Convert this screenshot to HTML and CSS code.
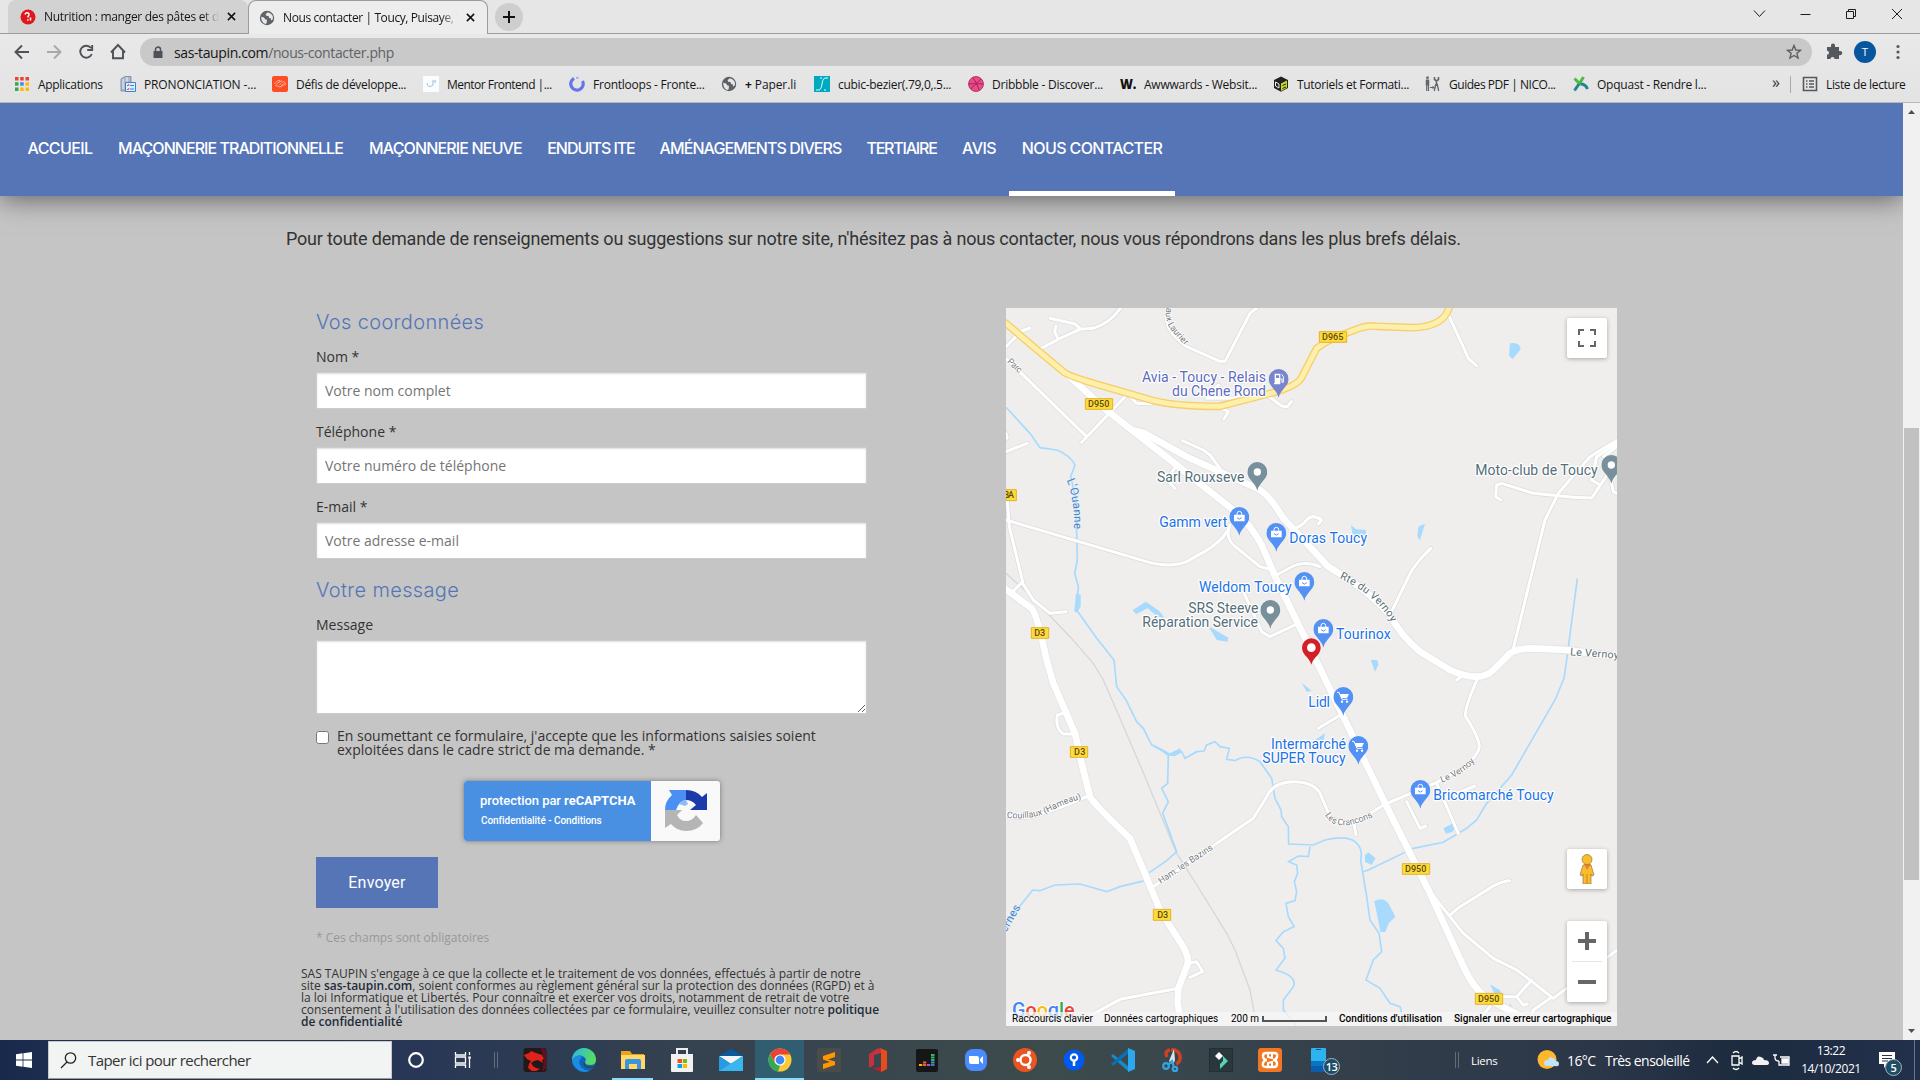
FILE: index.html
```html
<!DOCTYPE html>
<html lang="fr">
<head>
<meta charset="utf-8">
<title>Nous contacter | Toucy, Puisaye</title>
<link rel="stylesheet" href="styles.css">
</head>
<body>
<svg class="sprites" width="0" height="0" aria-hidden="true">
  <symbol id="globe" viewBox="0 0 16 16"><circle cx="8" cy="8" r="7.2" fill="#5f6368"/><path d="M2.2 6.8 5 7.4l1.4 2 1.6.4-.4 3.4-1.4.8C3.600 13 2 10.500 2.200 6.800ZM8.800 2.300l-2.200 1.900.6 1.600 2.300.3.600 1.900 1.600.2.500 2.200 1.700-1.200c.6-3.600-1.500-6-5.100-6.900Z" fill="#e8e8e8"/></symbol>
  <symbol id="bag" viewBox="-30 -30 60 88"><path d="M0 56C-5 32-30 22-30 0a30 30 0 0 1 60 0C30 22 5 32 0 56Z" fill="#5491f5"/><path d="M-16-7h32v20h-32Z" fill="#fff"/><path d="M-7-6v-4a7 7 0 0 1 14 0v4" fill="none" stroke="#fff" stroke-width="3"/><path d="M-7 2q7 9 14 0" fill="none" stroke="#5491f5" stroke-width="3"/></symbol>
  <symbol id="cart" viewBox="-30 -30 60 88"><path d="M0 56C-5 32-30 22-30 0a30 30 0 0 1 60 0C30 22 5 32 0 56Z" fill="#5491f5"/><path d="M-11-9h28l-6 12H-6Z" fill="#fff"/><path d="M-19-14h6l9 21H13" fill="none" stroke="#fff" stroke-width="3"/><circle cx="-4" cy="14" r="3.500" fill="#fff"/><circle cx="11" cy="14" r="3.500" fill="#fff"/></symbol>
  <symbol id="place" viewBox="-30 -30 60 88"><path d="M0 56C-5 32-30 22-30 0a30 30 0 0 1 60 0C30 22 5 32 0 56Z" fill="#78909c"/><circle r="11" fill="#fff"/></symbol>
  <symbol id="fuel" viewBox="-30 -30 60 88"><path d="M0 56C-5 32-30 22-30 0a30 30 0 0 1 60 0C30 22 5 32 0 56Z" fill="#7986cb"/><path d="M-12-16H5v32h-19v-4h2Z" fill="#fff"/><path d="M-8-11h9v8h-9Z" fill="#7986cb"/><path d="M5 0h5v10h4V-7L9-14" fill="none" stroke="#fff" stroke-width="3"/></symbol>
</svg>

<header class="browser">
  <div class="tabs">
    <div class="tab">
      <svg class="fav" viewBox="0 0 16 16"><circle cx="8" cy="8" r="7.500" fill="#e0171f"/><path d="M5 5.500Q6 3 8 4t0 3.500v1M7.800 10.200v1.500M10.500 8.500v3" stroke="#fff" stroke-width="1.500" fill="none"/></svg>
      <span class="tab-title">Nutrition : manger des pâtes et du</span>
      <svg class="close" viewBox="0 0 10 10"><path d="m1 1 8 8M9 1 1 9"/></svg>
    </div>
    <div class="tab active">
      <svg class="fav"><use href="#globe"/></svg>
      <span class="tab-title second">Nous contacter | Toucy, Puisaye, Y</span>
      <svg class="close" viewBox="0 0 10 10"><path d="m1 1 8 8M9 1 1 9"/></svg>
    </div>
    <div class="newtab"><svg viewBox="0 0 12 12"><path d="M6 0v12M0 6h12"/></svg></div>
    <svg class="winctl" viewBox="0 0 170 34"><path d="m6 10.500 5.500 6 5.500-6M52.500 14.500h10M98.500 11.500h7v7h-7ZM100.500 11.500v-2h7v7h-2M144 9l10 10M154 9l-10 10"/></svg>
  </div>
  <div class="toolbar">
    <svg class="navicons" viewBox="0 0 130 36"><g fill="none" stroke="#4e5257" stroke-width="1.900"><path d="M29 18H16M22 11.500 15.500 18l6.500 6.500"/><path d="M47 18h13M54 11.500l6.500 6.500-6.500 6.500" stroke="#a6a8aa"/><path d="M91 14a6 6 0 1 0 .8 6M92.200 11v5h-5"/><path d="M111 18.500 118 11l7 7.500M113 17v7.200h10V17"/></g></svg>
    <div class="omnibox">
      <svg class="lock" viewBox="0 0 10 13"><path d="M.5 5h9v7h-9Z" fill="#4e5257"/><path d="M2.500 5V3.500a2.500 2.500 0 0 1 5 0V5" fill="none" stroke="#4e5257" stroke-width="1.500"/></svg>
      <span class="url">sas-taupin.com<i>/nous-contacter.php</i></span>
      <svg class="star" viewBox="0 0 16 16"><path d="m8 1.500 1.800 4.500 4.700.3-3.600 3 1.200 4.700L8 11.500 3.900 14l1.200-4.700-3.600-3L6.200 6Z"/></svg>
    </div>
    <svg class="toolend" viewBox="0 0 100 36"><path d="M8 13h4v-1.500a2 2 0 0 1 4 0V13h4v4h1.200a2 2 0 0 1 0 4.200H20V25h-4.500a2 2 0 0 0-4 0H8v-4.200a2 2 0 0 0 0-4Z" fill="#55595e"/><circle cx="46" cy="18" r="11" fill="#07579f"/><text x="46" y="22" text-anchor="middle" fill="#fff" font-size="11.500">T</text><g fill="#55595e"><circle cx="79" cy="12.500" r="1.600"/><circle cx="79" cy="18" r="1.600"/><circle cx="79" cy="23.500" r="1.600"/></g></svg>
  </div>
  <div class="bookmarks">
    <div class="bm"><svg viewBox="0 0 16 16"><path d="M1 1h3.500v3.500H1ZM6.200 1h3.500v3.500H6.200ZM11.500 1H15v3.500h-3.500Z" fill="#ea4335"/><path d="M1 6.200h3.500v3.500H1Z" fill="#34a853"/><path d="M6.200 6.200h3.500v3.500H6.200Z" fill="#4285f4"/><path d="M11.500 6.200H15v3.500h-3.500ZM11.500 11.500H15V15h-3.500ZM6.200 11.500h3.500V15H6.200Z" fill="#fbbc04"/><path d="M1 11.500h3.500V15H1Z" fill="#34a853"/></svg><span class="b0">Applications</span></div>
    <div class="bm"><svg viewBox="0 0 16 16"><path d="M1 3 5 .5h6V15H1Z" fill="#aebaca" stroke="#66758a" stroke-width=".7"/><path d="M3 3v10M7 1v5" stroke="#e9f1fa"/><path d="M5.500 6.500h10v9h-10Z" fill="#dceeff" stroke="#3d82cb"/><path d="m7 9 1 1 1-2M7 13l1 1 1-2" stroke="#e44" fill="none"/><path d="M10 9.500h4M10 13h4" stroke="#3d82cb"/></svg><span class="b1">PRONONCIATION -...</span></div>
    <div class="bm"><svg viewBox="0 0 16 16"><rect width="16" height="16" rx="2" fill="#fc4d25"/><path d="m2 8 4-3.500h2L3.500 9.500 8 11l6-3-2.500-3L7 9.500M6 7l4-2.500M8 11l5-4.500" fill="none" stroke="#ffb79f" stroke-width=".8"/></svg><span class="b2">Défis de développe...</span></div>
    <div class="bm"><svg viewBox="0 0 16 16"><path d="M0 0h16v16H0Z" fill="#fafcff"/><path d="M4 7q1 6 6 2M10 4v5" stroke="#91c6dd" fill="none"/><path d="M12 4v3" stroke="#aac"/></svg><span class="b3">Mentor Frontend |...</span></div>
    <div class="bm"><svg viewBox="0 0 16 16"><path d="M5 2.400A6.200 6.200 0 1 0 13.500 5" fill="none" stroke="#6576e9" stroke-width="3.200"/><path d="M7 1.800h2.500" stroke="#a6afed" stroke-width="2"/></svg><span class="b4">Frontloops - Fronte...</span></div>
    <div class="bm"><svg><use href="#globe"/></svg><span class="b5"><b>+</b> Paper.li</span></div>
    <div class="bm"><svg viewBox="0 0 16 16"><path d="M0 0h16v16H0Z" fill="#00a9bd"/><path d="M2 14h3C9 13 7 3 11 2h3M6 2h2M10 14h2" fill="none" stroke="#d8ffff"/></svg><span class="b6">cubic-bezier(.79,0,.5...</span></div>
    <div class="bm"><svg viewBox="0 0 16 16"><circle cx="8" cy="8" r="7.400" fill="#ea4c89" stroke="#b92b61"/><path d="M5 2q4 4 6 12M1 8q9 0 12-5M3 13q4-7 12-5" fill="none" stroke="#a9235a"/></svg><span class="b7">Dribbble - Discover...</span></div>
    <div class="bm"><svg viewBox="0 0 16 16"><text x="0" y="13" font-size="14" font-weight="800" textLength="16" lengthAdjust="spacingAndGlyphs" fill="#111">W.</text></svg><span class="b8">Awwwards - Websit...</span></div>
    <div class="bm"><svg viewBox="0 0 16 16"><path d="m1 4 7-3.500L15 4v8l-7 3.700L1 12Z" fill="#222"/><path d="m8 7.500 6-3v7.200l-6 3.300Z" fill="#c7d724"/><path d="m2.500 6 3.500 2v4l-3.500-2Z" stroke="#eee" fill="none"/><path d="M9.500 9.500 13 8M9.500 12.500 13 11" stroke="#222"/></svg><span class="b9">Tutoriels et Formati...</span></div>
    <div class="bm"><svg viewBox="0 0 16 16" fill="none" stroke="#63666a" stroke-width="1.600"><path d="M2.500 3.500v6" stroke-width="3.500"/><path d="M1.700 9v6M3.500 9v6" stroke-width="1.200"/><circle cx="2.500" cy="1.700" r=".6"/><path d="M9.500 1v2.500l2 1.500 2-1.500V1M11.500 5v5"/><path d="m10.800 8-1.500 7M12.200 8l1.500 7" stroke-width="1.300"/><path d="M5 11.500h4M7.500 10 9 11.500 7.500 13" stroke-width="1"/></svg><span class="b10">Guides PDF | NICO...</span></div>
    <div class="bm"><svg viewBox="0 0 16 16"><path d="m1.500 2.500 5 5L10.500 1" fill="none" stroke="#4fbb45" stroke-width="3"/><path d="m6 8-4.500 6.500M7.500 8q5 0 7 5" fill="none" stroke="#23868c" stroke-width="3"/></svg><span class="b11">Opquast - Rendre l...</span></div>
    <div class="more">»</div>
    <div class="bm reading"><svg viewBox="0 0 16 16" fill="none" stroke="#55595e" stroke-width="1.600"><path d="M1.500 1.500h13v13h-13ZM4 5h1.500M7 5h5M4 8h1.500M7 8h5M4 11h1.500M7 11h5"/></svg><span class="b12">Liste de lecture</span></div>
  </div>
</header>

<main class="viewport">
  <div class="page">
    <nav class="menu">
      <a class="m0">ACCUEIL</a><a class="m1">MAÇONNERIE TRADITIONNELLE</a><a class="m2">MAÇONNERIE NEUVE</a><a class="m3">ENDUITS ITE</a><a class="m4">AMÉNAGEMENTS DIVERS</a><a class="m5">TERTIAIRE</a><a class="m6">AVIS</a><a class="m7 current">NOUS CONTACTER</a>
    </nav>
    <p class="intro"><span>Pour toute demande de renseignements ou suggestions sur notre site, n'hésitez pas à nous contacter, nous vous répondrons dans les plus brefs délais.</span></p>
    <div class="columns">
      <section class="left">
        <form class="form">
          <h2><span class="h-a">Vos coordonnées</span></h2>
          <label>Nom *</label>
          <input type="text" placeholder="Votre nom complet">
          <label>Téléphone *</label>
          <input type="text" placeholder="Votre numéro de téléphone">
          <label>E-mail *</label>
          <input type="text" placeholder="Votre adresse e-mail">
          <h2 class="second"><span class="h-b">Votre message</span></h2>
          <label>Message</label>
          <textarea></textarea>
          <div class="consent"><input type="checkbox"><span>En soumettant ce formulaire, j'accepte que les informations saisies soient<br>exploitées dans le cadre strict de ma demande. *</span></div>
          <div class="captcha">
            <div class="captcha-text"><span class="c1">protection par <b>reCAPTCHA</b></span><span class="c2">Confidentialité - Conditions</span></div>
            <svg viewBox="0 0 42 42"><path d="M21 0v10q-7 1-10 10H0Q0 11 7 5L4 0Z" fill="#4a90f2"/><path d="M21 0Q31 0 37 7l5-4v17H25l6-5q-4-5-10-5Z" fill="#1c3aa9"/><path d="M0 20h17l-5 5q3 6 9 6 6 0 10-6l7 8q-6 8-17 8-9 0-15-7l-6 4Z" fill="#b5b5b5"/><path d="m21 10 2 4-3 2-6-2q3-4 7-4Z" fill="#8fbcf8"/></svg>
          </div>
          <button type="button"><span>Envoyer</span></button>
          <p class="required"><span>* Ces champs sont obligatoires</span></p>
        </form>
        <p class="legal"><span class="l1">SAS TAUPIN s'engage à ce que la collecte et le traitement de vos données, effectués à partir de notre</span><br><span class="l2">site <b>sas-taupin.com</b>, soient conformes au règlement général sur la protection des données (RGPD) et à</span><br><span class="l3">la loi Informatique et Libertés. Pour connaître et exercer vos droits, notamment de retrait de votre</span><br><span class="l4">consentement à l'utilisation des données collectées par ce formulaire, veuillez consulter notre <b>politique</b></span><br><span class="l5"><b>de confidentialité</b></span></p>
      </section>
      <div class="map">
        <svg class="mapsvg" viewBox="18 24 1833 2154">
          <defs>
            <g id="thin">
              <path d="M150 55 225 72 240 85 230 92M118 148 180 115 240 88 280 85Q330 70 362 24M168 78 164 95 172 112M18 140 65 93 90 84"/>
              <path d="M510 24Q490 60 510 90T560 140L660 184H675L750 40 770 24"/>
              <path d="M18 175 260 410M245 427 385 280M385 285 410 310 455 312M620 295H700L770 270 800 285 845 318 862 320 874 305M625 285 655 255M660 322 685 335 672 357M547 422 610 450 630 465 662 508M530 495 500 540 525 565"/>
              <path d="M18 400 22 415M18 455 82 430M18 660 440 785Q510 805 560 785L630 745Q680 710 690 675 675 710 700 735L780 800 825 812M830 825 880 798Q915 782 960 800M880 685Q905 680 920 660T965 660L955 672M22 600 28 680 68 845 38 875M68 850 100 900 150 940 198 935M730 875 785 995 810 1010 895 970"/>
              <path d="M1345 44 1385 130 1405 175 1430 198M1172 940 1235 812 1260 778 1292 745M1540 1045 1635 660 1675 580 1770 470 1851 420M1503 600 1487 590 1490 555 1505 550 1600 580 1720 592 1775 594 1851 480M1851 430 1790 470 1775 540 1800 555M1810 470 1851 440M1830 530 1840 575 1851 580"/>
              <path d="M205 1235 172 1245Q165 1285 190 1302H222M18 1548Q70 1560 130 1540T265 1488M463 1758 760 1555 800 1490Q820 1445 880 1445T960 1480L990 1550Q1020 1575 1080 1560L1150 1515 1310 1447 1380 1410Q1440 1365 1438 1338T1397 1250Q1390 1230 1437 1126M1370 1140 1390 1125M1030 1240 955 1285M1060 1560 1068 1604M1310 1450 1375 1600"/>
              <path d="M1220 1505 1260 1585 1277 1578M1330 1495 1425 1458M1298 1785 1390 1900 1480 1975 1550 2010 1590 2040 1660 2095 1851 1950M1350 1845 1380 1820 1480 1758Q1510 1742 1530 1742M1595 2040 1550 2090H1510M1550 2090 1570 2115 1582 2112M1655 2092 1600 2130 1585 2178M1470 2120 1430 2165M562 1990 590 1985 608 2015 570 2032M535 2065 360 2098 265 2150"/>
            </g>
            <g id="wide">
              <path d="M210 232 325 335 530 495 700 630Q750 670 785 735L830 840 955 1095 1030 1250 1165 1530 1290 1780 1395 2010Q1420 2060 1450 2085T1590 2160"/>
              <path d="M405 392 430 398 560 470 660 515 770 565Q805 580 850 655L985 800 1050 840Q1110 880 1170 945 1205 1010 1260 1055L1350 1110Q1440 1150 1480 1110L1530 1060Q1550 1045 1600 1045L1700 1050 1851 1070"/>
              <path d="M18 868 95 925Q110 940 140 1080L160 1150 225 1300 245 1390 270 1490Q280 1510 390 1615L430 1710 480 1830 540 1925Q570 1970 562 1995L535 2065 533 2110 545 2178"/>
            </g>
            <path id="trunk" d="M18 70 100 140 190 215Q200 228 350 270L460 302Q530 319 660 319L830 275Q895 255 905 232L950 145Q990 115 1045 97L1080 84Q1110 75 1130 79L1240 83Q1330 80 1347 24"/>
          </defs>
          <rect x="18" y="24" width="1833" height="2154" fill="#efeeed"/>
          <path d="M18 820 90 885 210 1010 280 1090 310 1140 345 1220 435 1430 530 1660 600 1770 680 1900 705 1950 750 2070 770 2178" fill="none" stroke="#d5d7d8" stroke-width="4"/>
          <g fill="none" stroke="#a8dafe" stroke-width="5">
            <path d="M18 322 90 400 120 443 170 450Q210 465 225 495L212 530 228 600 230 700 232 780 224 820 235 860 230 930 290 1015 342 1080 350 1160 378 1200 410 1265 430 1285 455 1335 510 1365 545 1355 555 1375 590 1355 612 1353 620 1335 645 1325 660 1340 688 1345 680 1378 705 1382Q740 1360 780 1385L815 1435 825 1495 843 1530 845 1550 865 1580 866 1632 940 1635 975 1620Q1040 1605 1065 1625T1082 1680L1100 1790 1110 1860 1137 1900 1145 1955 1120 1980 1098 2040 1140 2065 1170 2110 1200 2120 1215 2178"/>
            <path d="M505 1365 503 1450 485 1465 505 1505 488 1540 530 1655 500 1682 448 1718M435 1742 360 1760 320 1775 240 1752 165 1755 120 1772 98 1770 18 1870M930 1640 925 1670 895 1668 866 1685 890 1695 893 1720 883 1745 890 1775 885 1802 858 1810 865 1850 882 1880 850 1895 828 1922 850 1945 855 1975 828 2010Q895 2030 880 2060L850 2100V2130L890 2178M1732 835 1700 1080 1692 1135 1665 1200 1535 1425 1460 1510 1430 1560 1400 1585 1330 1627 1240 1645 1105 1710 1090 1715"/>
          </g>
          <g fill="#a8dafe"><path d="m398 930 40-25 40 28 15 20-20-3-30-25-35 18ZM625 978l60 35-3 12-32-5ZM228 880l14 5v35l-12 18-7-5ZM455 1330l55 30 30-15 5 12-20 12-25-3ZM1530 130q30-5 32 18l-25 30-10-12ZM1053 675l15 13 30 2v16h-40ZM1255 680l20-9-15 50-8-12ZM905 1148l30 25-15 2ZM1112 1080h20l3 15-10 20ZM1330 1585l25-13 15 5-12 18-20 6ZM1095 1665l10-8 22 18-12 20-20-10ZM1123 1803q30-15 45 12l18 35-20 20-10 27-15-2ZM1470 2053l30 18 5 15-20-2ZM1530 2110l8 15h-10ZM945 1320l30-20-4 20ZM930 715l12-10-5 28Z"/></g>
          <g fill="none" stroke-linejoin="round" stroke-linecap="round">
            <use href="#thin" stroke="#dadbdd" stroke-width="13"/>
            <use href="#wide" stroke="#e2e3e4" stroke-width="25"/>
            <use href="#thin" stroke="#fff" stroke-width="9"/>
            <use href="#wide" stroke="#fff" stroke-width="20"/>
            <use href="#trunk" stroke="#f6cf6a" stroke-width="23"/>
            <use href="#trunk" stroke="#feefad" stroke-width="15"/>
          </g>
          <g class="shield">
            <path d="M256 296h82v32h-82ZM958 95h82v32h-82ZM18 569h31v33H18ZM94 983h52v32H94ZM211 1340h52v32h-52ZM460 1828h52v33h-52ZM1207 1691h82v32h-82ZM1426 2080h82v33h-82Z"/>
            <text x="264" y="322" textLength="64">D950</text><text x="966" y="121" textLength="64">D965</text><text x="12" y="595" textLength="30">3A</text><text x="103" y="1009" textLength="32">D3</text><text x="222" y="1366" textLength="34">D3</text><text x="472" y="1854" textLength="32">D3</text><text x="1215" y="1717" textLength="64">D950</text><text x="1434" y="2107" textLength="64">D950</text>
          </g>
          <defs>
            <path id="p-laur" d="M503 8Q488 60 515 92T565 146"/><path id="p-ouanne" d="M200 540Q225 600 222 700"/><path id="p-rte" d="M1018 835Q1130 885 1175 970"/><path id="p-coui" d="M20 1554Q100 1560 150 1534T250 1496"/><path id="p-cran" d="M975 1545Q1010 1610 1140 1540"/><path id="p-vern" d="M1325 1448Q1400 1420 1430 1376"/>
          </defs>
          <g class="street">
            <text><textPath href="#p-laur">Jaux Laurier</textPath></text>
            <text transform="translate(20 187) rotate(42)" textLength="50">Parc</text>
            <text class="big"><textPath href="#p-rte" textLength="208">Rte du Vernoy</textPath></text>
            <text class="big" x="1710" y="1066" transform="rotate(4 1710 1066)" textLength="146">Le Vernoy</text>
            <text><textPath href="#p-coui" textLength="235">Couillaux (Hameau)</textPath></text>
            <text transform="translate(482 1752) rotate(-33.500)" textLength="190">Ham. les Bazins</text>
            <text><textPath href="#p-cran" textLength="160">Les Crancons</textPath></text>
            <text><textPath href="#p-vern" textLength="120">Le Vernoy</textPath></text>
          </g>
          <g class="river"><text><textPath href="#p-ouanne" textLength="150">L'Ouanne</textPath></text><text transform="translate(18 1898) rotate(-60)" textLength="88">ernes</text></g>
          <g class="poi">
            <g fill="#5c6bc0"><text x="426" y="247" textLength="372">Avia - Toucy - Relais</text><text x="516" y="289" textLength="282">du Chene Rond</text></g>
            <g fill="#546e7a"><text x="471" y="547" textLength="262">Sarl Rouxseve</text><text x="1426" y="525" textLength="367">Moto-club de Toucy</text><text x="565" y="939" textLength="210">SRS Steeve</text><text x="427" y="981" textLength="347">Réparation Service</text></g>
            <g fill="#1a73e8"><text x="478" y="681" textLength="204">Gamm vert</text><text x="868" y="730" textLength="233">Doras Toucy</text><text x="597" y="877" textLength="278">Weldom Toucy</text><text x="1008" y="1017" textLength="164">Tourinox</text><text x="925" y="1221" textLength="65">Lidl</text><text x="813" y="1347" textLength="225">Intermarché</text><text x="787" y="1390" textLength="250">SUPER Toucy</text><text x="1300" y="1501" textLength="361">Bricomarché Toucy</text></g>
          </g>
          <g>
            <use href="#fuel" x="806" y="207" width="60" height="88"/><use href="#place" x="742" y="486" width="60" height="88"/><use href="#place" x="1804" y="465" width="60" height="88"/><use href="#place" x="781" y="900" width="60" height="88"/>
            <use href="#bag" x="688" y="621" width="60" height="88"/><use href="#bag" x="799" y="669" width="60" height="88"/><use href="#bag" x="883" y="816" width="60" height="88"/><use href="#bag" x="940" y="957" width="60" height="88"/><use href="#cart" x="1000" y="1161" width="60" height="88"/><use href="#cart" x="1045" y="1308" width="60" height="88"/><use href="#bag" x="1231" y="1440" width="60" height="88"/>
            <path d="M934 1094C929 1072 906 1065 906 1043a28 28 0 0 1 56 0C962 1065 939 1072 934 1094Z" fill="#d32026"/><circle cx="934" cy="1043" r="13" fill="#fff"/>
          </g>
          <g class="google"><text x="36" y="2152" textLength="188" lengthAdjust="spacingAndGlyphs"><tspan fill="#4285f4">G</tspan><tspan fill="#ea4335">o</tspan><tspan fill="#fbbc05">o</tspan><tspan fill="#4285f4">g</tspan><tspan fill="#34a853">l</tspan><tspan fill="#ea4335">e</tspan></text></g>
        </svg>
        <div class="mapbtn full"><svg viewBox="0 0 18 18"><path d="M1 6V1h5M12 1h5v5M17 12v5h-5M6 17H1v-5"/></svg></div>
        <div class="mapbtn man"><svg viewBox="0 0 18 30"><path d="M5 11h8l3 10-2 1-1-2v10H5V20l-1 2-2-1Z" fill="#fbbc2c" stroke="#927540" stroke-width=".7"/><path d="M9 20v10" stroke="#c28a1f"/><path d="m6 10 3 6 4-6Z" fill="#e8802f"/><circle cx="9" cy="5.500" r="5" fill="#fbbc2c" stroke="#927540" stroke-width=".7"/></svg></div>
        <div class="mapbtn zoom"><svg viewBox="0 0 40 81"><path d="M11 20h18M20 11v18M11 61h18" stroke="#666" stroke-width="4"/><path d="M5 40.500h30" stroke="#e6e6e6"/></svg></div>
        <div class="mapbar"><span class="k1">Raccourcis clavier</span><span class="k2">Données cartographiques</span><span class="k3">200 m</span><i></i><span class="k4">Conditions d'utilisation</span><span class="k5">Signaler une erreur cartographique</span></div>
      </div>
    </div>
  </div>
  <div class="scroll"><svg viewBox="0 0 17 17"><path d="m5 11 3.500-4 3.500 4Z"/></svg><div class="thumb"></div><svg viewBox="0 0 17 17"><path d="m5 6 3.500 4L12 6Z"/></svg></div>
</main>

<footer class="taskbar">
  <div class="start"><svg viewBox="0 0 16 16"><path d="m0 2.200 6.600-.9v6.300H0ZM7.400 1.200 16 0v7.600H7.400ZM0 8.400h6.600v6.300L0 13.800ZM7.400 8.400H16V16l-8.600-1.200Z" fill="#fff"/></svg></div>
  <div class="search"><svg viewBox="0 0 17 17"><circle cx="10.500" cy="6" r="5.200"/><path d="M7 10 1 16"/></svg><span>Taper ici pour rechercher</span></div>
  <div class="sys"><svg viewBox="0 0 24 24"><circle cx="12" cy="12" r="6.800" fill="none" stroke="#fff" stroke-width="2.200"/></svg></div>
  <div class="sys"><svg viewBox="0 0 24 24" fill="none" stroke="#fff" stroke-width="1.300"><path d="M4.500 4v3h10V4M4.500 20v-3h10v3M4.500 9h10v6h-10ZM18.500 4v3M18.500 11v9"/><path d="M17.300 8.500h2.500v2.300h-2.500Z" fill="#fff" stroke="none"/></svg></div>
  <div class="grip"></div>
  <div class="apps">
    <div><svg viewBox="0 0 24 24"><rect x=".5" width="23" height="24" rx="3" fill="#241719"/><path d="M18 0h2q3 1 3 4v16l-4 4 2-12Z" fill="#62101d"/><path d="m1 7 5-2 2-2 5 2 6 2 2 4-2 1 1 3-5-3-4 1-3 2 2 3 3 2 4 1-4 2H9l-4-3 1-4 2-3-4-2Z" fill="#e0221d"/></svg></div>
    <div><svg viewBox="0 0 24 24"><defs><linearGradient id="eg" x1="0" y1="0" x2="1" y2=".3"><stop stop-color="#2bb7e8"/><stop offset="1" stop-color="#56dc62"/></linearGradient></defs><circle cx="12" cy="12" r="12" fill="#0e63b9"/><path d="M0 12A12 12 0 0 1 24 12q0 5-6 5-5 0-5-3 2-3-1-5Q6 5 0 12Z" fill="url(#eg)"/><path d="M0 12Q6 5 10 9q-5 4-1 10 5 5 10 3Q10 27 3 19 0 16 0 12Z" fill="#1b8de0"/><path d="M13 14q-1 6 8 4l1.500 0q-4 4-9 1-4-3-.5-5Z" fill="#35424f"/></svg></div>
    <div class="open"><svg viewBox="0 0 24 24"><path d="M0 3h9l2 3h12v15H0Z" fill="#e8a51c"/><path d="M0 7h24v14H0Z" fill="#ffd867"/><path d="M4 21v-8q0-2 2-2h12q2 0 2 2v8h-4v-5H8v5Z" fill="#3d93dc"/></svg></div>
    <div><svg viewBox="0 0 24 24"><path d="M7 7V1h10v6" fill="none" stroke="#ececec" stroke-width="2"/><path d="M1 6h22v17q0 1-1 1H2q-1 0-1-1Z" fill="#f1f1f1"/><path d="M7.500 11H12v4H7.500Z" fill="#f25022"/><path d="M12.800 11H17v4h-4.200Z" fill="#7fba00"/><path d="M7.500 16H12v4H7.500Z" fill="#00a4ef"/><path d="M12.800 16H17v4h-4.200Z" fill="#ffb900"/></svg></div>
    <div><svg viewBox="0 0 24 24"><path d="m0 8 12-7 12 7v4H0Z" fill="#0b5a9d"/><path d="M0 8h24L12 16Z" fill="#f2f5f7"/><path d="m0 8 12 8 12-8v15H0Z" fill="#2899e3"/><path d="M0 23 24 8v15Z" fill="#38b7ee"/></svg></div>
    <div class="open now"><svg viewBox="0 0 24 24"><circle cx="12" cy="12" r="11.500" fill="#fcc934"/><path d="M2 6.300A11.500 11.500 0 0 1 22 6.500H12L7 15Z" fill="#ea4335"/><path d="M2 6.300 7 15l5 2.500-2 6A11.500 11.500 0 0 1 2 6.300Z" fill="#34a853"/><circle cx="12" cy="12" r="5.600" fill="#fff"/><circle cx="12" cy="12" r="4.400" fill="#4285f4"/></svg></div>
    <div><svg viewBox="0 0 24 24"><rect width="24" height="24" rx="2" fill="#4b4b4b"/><path d="m6 8 12-4v5l-7 2.500 7 2v3.500L6 21v-5l7-2-7-2.500Z" fill="#ff9800"/></svg></div>
    <div><svg viewBox="0 0 24 24"><path d="m3 6 9-6 3 1v4L8 7v10l-5 3Z" fill="#c8313c"/><path d="m14 0 7 3v18l-6 3V3Z" fill="#e84b1c"/><path d="m6 20 9-1v5Z" fill="#b3202e"/></svg></div>
    <div><svg viewBox="0 0 24 24"><rect x="1" y="1" width="22" height="23" rx="2" fill="#161616"/><path d="M4 17h3.300" stroke="#ffb000" stroke-width="2"/><path d="M8 17h3.300M8 14.500h3.300" stroke="#ee6044" stroke-width="2"/><path d="M12 17h3.300" stroke="#a450d0" stroke-width="2"/><path d="M16 17h3.500" stroke="#3a78d8" stroke-width="2"/><path d="M16 14.500h3.500M16 12h3.500" stroke="#30a4a1" stroke-width="2"/><path d="M16 9.500h3.500M16 7h3.500" stroke="#3ab46a" stroke-width="2"/></svg></div>
    <div><svg viewBox="0 0 24 24"><rect x="1" y="1" width="22" height="22" rx="8" fill="#4a8cff"/><path d="M5 8h8q2 0 2 2v6H7q-2 0-2-2ZM16 11l3-3v8l-3-3Z" fill="#fff"/></svg></div>
    <div><svg viewBox="0 0 24 24"><circle cx="12" cy="12" r="12" fill="#e95420"/><circle cx="12.500" cy="12" r="5" fill="none" stroke="#fff" stroke-width="2.400"/><g fill="#fff"><circle cx="5" cy="12" r="2"/><circle cx="16" cy="5" r="2"/><circle cx="16" cy="19" r="2"/></g></svg></div>
    <div><svg viewBox="0 0 24 24"><circle cx="12" cy="12" r="10.500" fill="#005af0"/><circle cx="12" cy="9.500" r="3.200" fill="none" stroke="#fff" stroke-width="2.200"/><path d="M12 13v5" stroke="#fff" stroke-width="2.500"/></svg></div>
    <div><svg viewBox="0 0 24 24"><path d="m0 8 2-2 16 13v5Z" fill="#168bd1"/><path d="m0 16 2 2L18 5V0Z" fill="#0871b3"/><path d="m17 0 7 3v18l-7 3Z" fill="#2ca8ef"/></svg></div>
    <div><svg viewBox="0 0 24 24"><path d="M11 2h4q6 3 5 9-1 4-4 5M7 9Q4 3 10 2" fill="none" stroke="#cf4125" stroke-width="3.500"/><path d="m9 13 5-12 1 11-2 5" fill="#dde3e5"/><g fill="none" stroke="#33a3e2" stroke-width="2.200"><circle cx="6" cy="18" r="2.800"/><circle cx="15" cy="21" r="2.200"/><path d="m8 17 4-4 2 6"/></g></svg></div>
    <div><svg viewBox="0 0 24 24"><rect width="24" height="24" fill="#2a373d" stroke="#1e292d"/><path d="m10 4 4 4-4 4-4-4Z" fill="#fff"/><path d="m14 8 5 5-8 8v-5l3-3Z" fill="#52d6b4"/></svg></div>
    <div><svg viewBox="0 0 24 24"><rect width="24" height="24" rx="3" fill="#f37623"/><path d="M8 5h8q4 0 3 4-1 3-4 3 4 0 4 4 0 3-3 3H8q-4 0-3-4 1-3 4-3-4 0-4-4 0-3 3-3Z" fill="none" stroke="#fff" stroke-width="2.400"/><path d="M10 5v4l4 1V5M10 19v-4l4-1v5" fill="none" stroke="#fff" stroke-width="2"/></svg></div>
    <div><svg viewBox="0 0 24 24"><rect x="4" width="15" height="24" rx="1" fill="#2db3ee"/><path d="M4 13h15v5H4Z" fill="#0876c5"/><path d="M4 18h15v6H4Z" fill="#0a5cad"/><path d="M9 1.500h5" stroke="#1c4d73"/></svg><b class="badge">13</b></div>
  </div>
  <div class="grip two"></div>
  <span class="liens">Liens</span>
  <svg class="weather" viewBox="0 0 22 22"><circle cx="10" cy="10.500" r="9.500" fill="#ffb72b"/><path d="M10 17q-3 0-3-3t4-3q1-4 5-2 3 1 3 3 3 0 3 3t-4 2Z" fill="#bfe3fa"/></svg>
  <span class="deg">16°C</span><span class="sunny">Très ensoleillé</span>
  <svg class="tray" viewBox="0 0 96 24" fill="none" stroke="#fff" stroke-width="1.300"><path d="m6 15 5.500-6 5.500 6M31 8h7v9h-7ZM38 11l3-2v7l-3-2M32 5q3-3 6 0M32 20q3 3 6 0M79 9h9v8H78v-4M74 7v3q0 3 4 3M72 7h4"/><path d="M81 11h6v4h-6Z" fill="#fff"/><path d="M51 15q0-3 4-3 1-5 5-3 3 1 3 3 5 0 5 3 0 2-3 2H55q-4 0-4-2Z" fill="#f1f1f1" stroke="none"/></svg>
  <div class="clock"><span class="time">13:22</span><span class="date">14/10/2021</span></div>
  <div class="notif"><svg viewBox="0 0 18 18"><path d="M1 1h16v12H9l-3 4v-4H1Z" fill="#fff"/><path d="M4 4.500h10M4 7.500h10M4 10h6" stroke="#26314a" stroke-width="1.200"/></svg><b class="badge">5</b></div>
  <div class="peek"></div>
</footer>
</body>
</html>
```
FILE: styles.css
```css
* { box-sizing: border-box; }
body { margin: 0; width: 1920px; height: 1080px; overflow: hidden; display: flex; flex-direction: column; font-family: "Open Sans", "Noto Sans", sans-serif; background: #c5c5c5; }
svg { display: block; flex: none; }
.sprites { position: absolute; }
span { white-space: nowrap; }

/* Browser chrome */
.browser { height: 103px; flex: none; background: linear-gradient(#ececec, #e3e3e3); border-bottom: 1px solid #b8b8b8; font-size: 12px; color: #161616; }
.tabs { height: 34px; display: flex; background: #e6e6e6; border-bottom: 1px solid #9c9c9f; padding-left: 8px; }
.tab { width: 240px; height: 33px; display: flex; align-items: center; padding: 0 10px 0 12px; background: #d2d2d2; border-radius: 8px 8px 0 0; }
.tab.active { height: 34px; background: #ededed; border: 1px solid #9c9c9f; border-bottom: 0; padding-left: 10px; }
.fav { width: 16px; height: 16px; margin-right: 8px; }
.tab-title { width: 176px; overflow: hidden; letter-spacing: -.29px; mask-image: linear-gradient(90deg, #000 158px, transparent 175px); }
.tab-title.second { letter-spacing: -.4px; }
.close { width: 9px; height: 9px; margin-left: auto; stroke: #111; stroke-width: 1.7; }
.tab .close { margin-right: 2px; }
.newtab { width: 28px; height: 28px; margin: 3px 0 0 7px; border-radius: 50%; background: #cecece; display: grid; place-items: center; }
.newtab svg { width: 12px; height: 12px; stroke: #111; stroke-width: 2; }
.winctl { width: 170px; height: 34px; margin-left: auto; margin-right: 2px; fill: none; stroke: #1c1c1c; }
.toolbar { height: 36px; display: flex; align-items: center; }
.navicons { width: 130px; height: 36px; }
.omnibox { width: 1672px; height: 28px; margin-left: 10px; border-radius: 14px; background: #c9c9c9; display: flex; align-items: center; padding: 0 10px 0 13px; }
.lock { width: 10px; height: 13px; margin-right: 11px; }
.url { font-size: 14px; letter-spacing: -.38px; }
.url i { font-style: normal; color: #5e6267; }
.star { width: 16px; height: 16px; margin-left: auto; fill: none; stroke: #5b5f64; stroke-width: 1.4; }
.toolend { width: 100px; height: 36px; margin-left: 7px; }
.bookmarks { height: 28px; display: grid; align-items: center; padding-left: 14px; grid-template-columns: 106px 152px 151px 146px 152px 93px 154px 152px 153px 152px 148px 199px 20px 1fr; }
.bm { display: flex; align-items: center; gap: 8px; letter-spacing: -.3px; }
.bm svg { width: 16px; height: 16px; }
.b1 { letter-spacing: -.13px; }
.b3 { letter-spacing: -.52px; }
.b4, .b7, .b8, .b11 { letter-spacing: -.23px; }
.b5 { letter-spacing: -.1px; }
.b10 { letter-spacing: -.46px; }
.b12 { letter-spacing: -.36px; }
.more { font-size: 16px; line-height: 16px; padding-bottom: 4px; color: #333; }
.reading { border-left: 1px solid #aaa; padding-left: 11px; margin-left: -2px; }

/* Site */
.viewport { height: 937px; flex: none; display: flex; }
.page { width: 1903px; background: #c5c5c5; color: #333; }
.menu { height: 93px; background: #5675b7; display: grid; grid-template-columns: 90px 251px 179px 112px 207px 95px 60px 166px; padding-left: 15px; box-shadow: 0 2px 26px rgba(0, 0, 0, .55); clip-path: inset(0 0 -60px 0); }
.menu a { height: 93px; color: #fff; font: 500 16px/90px Inter, sans-serif; letter-spacing: -.6px; text-align: center; white-space: nowrap; }
.menu .m1 { letter-spacing: -.95px; }
.menu .m2 { letter-spacing: -.85px; }
.menu .m3 { letter-spacing: -1.05px; }
.menu .m4 { letter-spacing: -.9px; }
.menu .m5 { letter-spacing: -1.2px; }
.menu .current { border-bottom: 5px solid #fff; }
.intro { margin: 0; padding: 29px 0 0 286px; font: 18px/28px Roboto, sans-serif; letter-spacing: -.192px; }
.columns { display: flex; margin-top: 55px; padding-left: 301px; }
.left { width: 705px; }
.form { padding: 2px 0 0 15px; width: 566px; }
.form h2 { margin: 0; font: 300 20px/24px Inter, sans-serif; letter-spacing: .35px; color: #5675b7; }
.form label { display: block; font-size: 14px; line-height: 20px; margin: 13px 0 5px; }
.form input[type=text], .form textarea { display: block; width: 551px; height: 37px; border: 1px solid #ccc; background: #fff; box-shadow: inset 0 1px 2px #ddd; padding: 0 8px; font: 14px "Open Sans", sans-serif; color: #555; }
.form ::placeholder { color: #757575; opacity: 1; }
.form h2.second { margin-top: 19px; }
.form textarea { height: 74px; }
.consent { display: flex; margin-top: 15px; font-size: 14px; line-height: 14px; gap: 8px; }
.consent input { margin: 2px 0 0; width: 13px; height: 13px; }
.captcha { width: 256px; height: 60px; margin: 24px 0 16px 148px; border-radius: 3px; background: #f9f9f9; display: flex; align-items: center; box-shadow: 0 0 5px #777; overflow: hidden; }
.captcha svg { width: 42px; height: 42px; margin-left: 14px; }
.captcha-text { width: 187px; height: 60px; background: #4a90e2; color: #fff; font: 500 13px/20px Roboto, sans-serif; letter-spacing: -.05px; padding: 10px 0 0 16px; display: flex; flex-direction: column; }
.c2 { font-size: 10px; line-height: 20px; padding-left: 1px; }
button { display: block; width: 122px; height: 51px; border: 0; background: #5675b7; color: #fff; font: 16px Roboto, sans-serif; letter-spacing: .2px; padding: 0; }
.required { margin: 20px 0 0; font-size: 12px; line-height: 20px; color: #999; }
.legal { margin: 20px 0 0; font-size: 12px; line-height: 12px; }
.legal b { font-weight: 600; color: #222b3a; }

/* Map */
.map { width: 611px; height: 718px; position: relative; overflow: hidden; font-family: Roboto, sans-serif; }
.mapsvg { width: 611px; height: 718px; }
.shield path { fill: #ffdb37; stroke: #e2b42e; stroke-width: 3; }
.shield text { font-size: 27px; font-weight: 500; fill: #5c4b14; }
.street text, .poi text, .river text { stroke: #fff; stroke-width: 7; paint-order: stroke; stroke-linejoin: round; }
.street text { font-size: 27px; fill: #75797d; stroke-width: 5; }
.street .big { font-size: 32px; fill: #5a6e75; }
.poi text { font-size: 42px; }
.river text { font-size: 34px; fill: #4a80c4; stroke: #e2f2fd; stroke-width: 3; }
.google text { font-size: 62px; font-weight: 500; stroke: #fff; stroke-width: 5; paint-order: stroke; }
.mapbtn { position: absolute; right: 10px; width: 40px; height: 40px; background: #fff; border-radius: 2px; box-shadow: 0 1px 4px rgba(0, 0, 0, .3); display: grid; place-items: center; }
.full { top: 10px; }
.full svg { width: 18px; height: 18px; fill: none; stroke: #666; stroke-width: 2; }
.man { top: 541px; }
.man svg { width: 18px; height: 30px; }
.zoom { top: 613px; height: 81px; }
.zoom svg { width: 40px; height: 81px; }
.mapbar { position: absolute; inset: auto 0 0 0; height: 14px; background: rgba(245, 245, 245, .75); display: flex; align-items: center; padding-left: 6px; font-size: 10px; line-height: 14px; color: #000; }
.k1 { width: 92px; } .k2 { width: 127px; } .k3 { width: 31px; }
.mapbar i { width: 65px; height: 6px; border: 2px solid #555; border-top: 0; }
.k4 { margin-left: 12px; width: 115px; font-weight: 500; letter-spacing: .04px; } .k5 { font-weight: 500; letter-spacing: .06px; }

.scroll { width: 17px; background: #f1f1f1; display: flex; flex-direction: column; }
.scroll svg { width: 17px; height: 17px; fill: #505050; }
.thumb { height: 452px; width: 15px; margin: 308px auto auto 1px; background: #c1c1c1; }

/* Taskbar */
.taskbar { height: 40px; flex: none; display: flex; align-items: center; color: #fff; font-size: 12px; background: linear-gradient(90deg, #18294c 0, #1c2d4f 45px, #283755 420px, #35424f 700px, #3d4b4c 1050px, #333e4b 1370px, #2b3648 1600px, #1d2b3f 1740px, #22304b 1920px); }
.start { width: 48px; display: grid; place-items: center; }
.start svg { width: 16px; height: 16px; }
.search { width: 344px; height: 38px; background: #f2f3f3; border: 1px solid #c9c9c9; border-bottom-color: #999; display: flex; align-items: center; gap: 11px; padding-left: 11px; color: #333; font-size: 15px; letter-spacing: -.57px; }
.search svg { width: 17px; height: 17px; fill: none; stroke: #222; stroke-width: 1.3; }
.sys { width: 47px; display: grid; place-items: center; }
.sys svg { width: 24px; height: 24px; }
.grip { width: 4px; height: 16px; border: 1px solid #626d7a; border-width: 0 1px; margin: 0 12px 0 8px; }
.apps { display: grid; grid-template-columns: repeat(17, 49px); height: 40px; }
.apps > div { position: relative; display: grid; place-items: center; }
.apps svg { width: 24px; height: 24px; }
.apps .open::after { content: ""; position: absolute; bottom: 0; left: 4px; right: 4px; height: 2px; background: #8edcf8; }
.apps .now { background: #315d70; }
.apps .now::after { left: 0; right: 0; }
.badge { position: absolute; right: 3px; bottom: 5px; width: 17px; height: 17px; border: 1px solid #9fb5c1; border-radius: 50%; background: #1e4d66; font: 600 11px/15px "Open Sans", sans-serif; text-align: center; letter-spacing: -.5px; }
.grip.two { margin: 0 12px 0 112px; }
.liens { font-size: 11.5px; letter-spacing: -.3px; width: 66px; }
.weather { width: 22px; height: 22px; }
.deg { font-size: 14px; margin-left: 8px; width: 38px; letter-spacing: -.6px; }
.sunny { font-size: 14px; width: 96px; letter-spacing: -.56px; }
.tray { width: 96px; height: 24px; }
.clock { width: 66px; margin-left: 1px; display: flex; flex-direction: column; align-items: center; line-height: 18px; letter-spacing: -.4px; }
.notif { position: relative; width: 34px; height: 40px; margin-left: 13px; }
.notif svg { width: 18px; height: 18px; margin: 11px 0 0 1px; }
.notif .badge { right: 9px; bottom: 4px; }
.peek { width: 1px; height: 40px; margin-left: 3px; background: #697489; }
```
